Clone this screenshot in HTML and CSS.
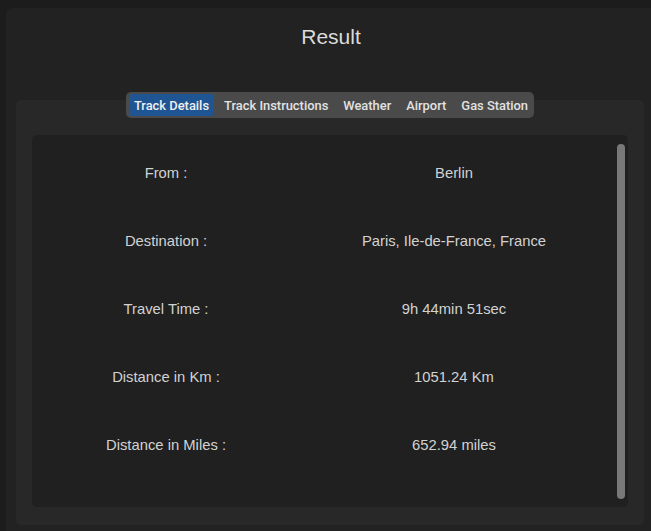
FILE: index.html
```html
<!DOCTYPE html>
<html>
<head>
<meta charset="utf-8">
<title>Result</title>
<link rel="stylesheet" href="styles.css">
</head>
<body>
<div class="window">
  <h1 class="title">Result</h1>
  <div class="tabbar">
    <span class="tab active">Track Details</span>
    <span class="tab">Track Instructions</span>
    <span class="tab">Weather</span>
    <span class="tab">Airport</span>
    <span class="tab">Gas Station</span>
  </div>
  <div class="pane">
    <div class="inner">
      <div class="rows">
        <div class="label">From :</div><div class="value">Berlin</div>
        <div class="label">Destination :</div><div class="value">Paris, Ile-de-France, France</div>
        <div class="label">Travel Time :</div><div class="value">9h 44min 51sec</div>
        <div class="label">Distance in Km :</div><div class="value">1051.24 Km</div>
        <div class="label">Distance in Miles :</div><div class="value">652.94 miles</div>
      </div>
      <div class="scrollbar"></div>
    </div>
  </div>
</div>
</body>
</html>
```
FILE: styles.css
```css
html, body {
  margin: 0;
  padding: 0;
  background: #1c1c1c;
  height: 100%;
  overflow: hidden;
}
body {
  font-family: "Liberation Sans", Arial, sans-serif;
}
.window {
  margin: 8px 0 0 6px;
  height: 523px;
  box-sizing: border-box;
  background: #222222;
  border-top-left-radius: 6px;
  padding: 0 7px 6px 10px;
  display: flex;
  flex-direction: column;
}
.title {
  margin: 0;
  padding-top: 16px;
  height: 30px;
  font-size: 21px;
  font-weight: normal;
  line-height: 26px;
  color: #dcdcdc;
  text-align: center;
  padding-left: 2px;
}
.tabbar {
  align-self: center;
  margin-top: 38px;
  margin-bottom: -18px;
  position: relative;
  z-index: 1;
  display: flex;
  gap: 5px;
  padding: 2px 1px 2px 3px;
  background: #4a4a4a;
  border-radius: 5px;
  font-family: Roboto, "Liberation Sans", sans-serif;
  font-weight: 500;
  font-size: 12.9px;
  color: #e2e2e2;
  margin-right: 0;
}
.tab {
  padding: 0 5px;
  height: 22px;
  line-height: 23px;
  border-radius: 3px;
  white-space: nowrap;
}
.tab.active {
  background: #1f5592;
  color: #f0f0f0;
}
.pane {
  flex: 1;
  background: #282828;
  border-radius: 5px;
  padding: 35px 16px 18px 16px;
  display: flex;
}
.inner {
  flex: 1;
  background: #202020;
  border-radius: 5px;
  display: flex;
  padding: 9px 3px 8px 0;
}
.rows {
  flex: 1;
  display: grid;
  grid-template-columns: 268px 308px;
  grid-auto-rows: 68px;
  align-content: start;
  align-items: center;
  margin-top: -5px;
  font-size: 14.8px;
  color: #d2d2d2;
}
.label, .value {
  text-align: center;
  line-height: 17px;
}
.scrollbar {
  width: 8px;
  background: #787878;
  border-radius: 4px;
}
```
